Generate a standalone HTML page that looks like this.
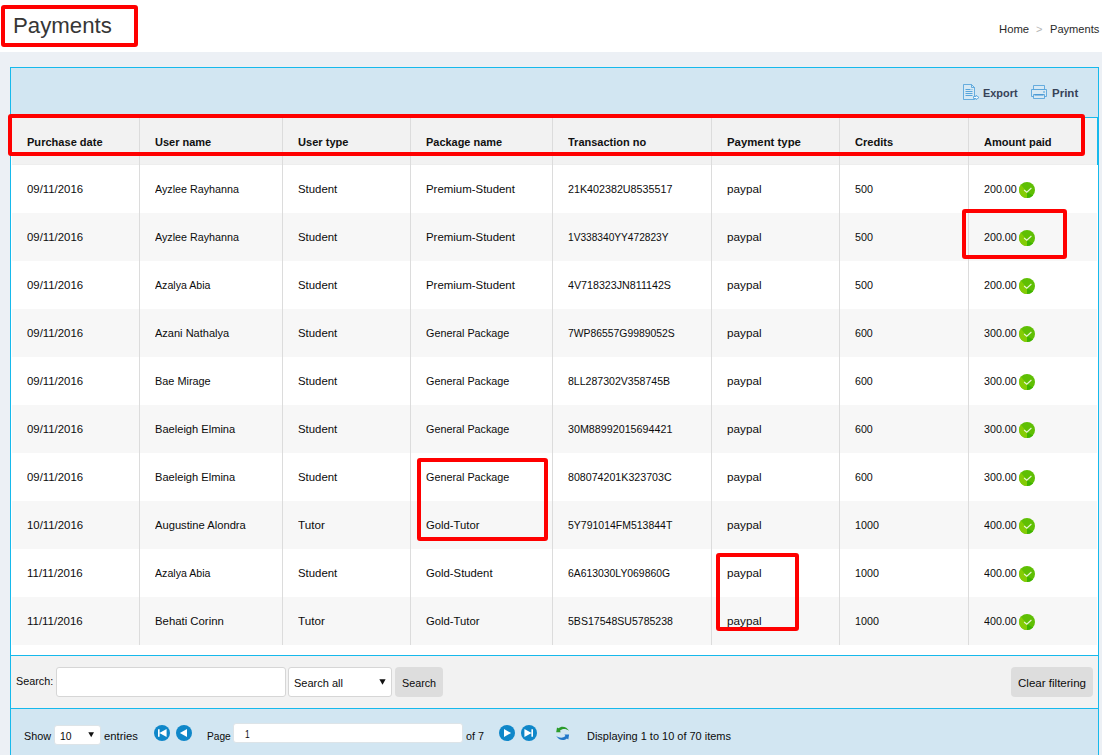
<!DOCTYPE html>
<html><head><meta charset="utf-8"><title>Payments</title>
<style>
html,body{margin:0;padding:0}
body{width:1102px;height:755px;overflow:hidden;position:relative;background:#ecf0f5;font-family:"Liberation Sans",sans-serif}
body>div,body>svg,body>span{position:absolute;display:block;box-sizing:content-box}
.t{white-space:nowrap;line-height:20px;transform-origin:0 50%}
</style></head><body>
<div style="left:0px;top:0px;width:1102px;height:52px;background:#fff;"></div>
<div style="left:10px;top:67px;width:1087px;height:700px;background:#d2e6f2;border:1px solid #16b9ec"></div>
<div style="left:11px;top:117px;width:1087px;height:539px;background:#fff;"></div>
<div style="left:11px;top:117px;width:1087px;height:1px;background:#16b9ec;"></div>
<div style="left:12px;top:118px;width:1085px;height:47px;background:#f2f2f2;"></div>
<div style="left:12px;top:164px;width:1085px;height:1px;background:#eeeeee;"></div>
<div style="left:1097px;top:118px;width:1px;height:47px;background:#16b9ec;"></div>
<div style="left:12px;top:213px;width:1085px;height:48px;background:#f7f7f7;"></div>
<div style="left:12px;top:309px;width:1085px;height:48px;background:#f7f7f7;"></div>
<div style="left:12px;top:405px;width:1085px;height:48px;background:#f7f7f7;"></div>
<div style="left:12px;top:501px;width:1085px;height:48px;background:#f7f7f7;"></div>
<div style="left:12px;top:597px;width:1085px;height:48px;background:#f7f7f7;"></div>
<div style="left:139px;top:118px;width:1px;height:527px;background:#dcdcdc;"></div>
<div style="left:282px;top:118px;width:1px;height:527px;background:#dcdcdc;"></div>
<div style="left:410px;top:118px;width:1px;height:527px;background:#dcdcdc;"></div>
<div style="left:552px;top:118px;width:1px;height:527px;background:#dcdcdc;"></div>
<div style="left:711px;top:118px;width:1px;height:527px;background:#dcdcdc;"></div>
<div style="left:839px;top:118px;width:1px;height:527px;background:#dcdcdc;"></div>
<div style="left:968px;top:118px;width:1px;height:527px;background:#dcdcdc;"></div>
<div style="left:11px;top:655px;width:1087px;height:1px;background:#16b9ec;"></div>
<div style="left:11px;top:656px;width:1087px;height:52px;background:#f2f2f2;"></div>
<div style="left:11px;top:708px;width:1087px;height:1px;background:#16b9ec;"></div>
<div style="left:56px;top:667px;width:228px;height:28px;background:#fff;border:1px solid #d6d6d6;border-radius:3px"></div>
<div style="left:288px;top:667px;width:102px;height:28px;background:#fff;border:1px solid #d6d6d6;border-radius:3px"></div>
<svg style="left:378.5px;top:679px" width="7" height="6.2" viewBox="0 0 8 7"><path d="M0.4 0.3h7.2L4 6.6z" fill="#111"/></svg>
<div style="left:395px;top:667px;width:48px;height:30px;background:#dddddd;border-radius:4px"></div>
<div style="left:1011px;top:667px;width:82px;height:30px;background:#dddddd;border-radius:4px"></div>
<div style="left:54.4px;top:725.2px;width:44.6px;height:17.6px;background:#fff;border:1px solid #dde4e8;border-radius:3px"></div>
<svg style="left:87.8px;top:732.2px" width="6.4" height="5.6" viewBox="0 0 8 7"><path d="M0.4 0.3h7.2L4 6.6z" fill="#111"/></svg>
<div style="left:233px;top:723px;width:228px;height:18px;background:#fff;border:1px solid #dde4e8;border-radius:3px"></div>
<svg style="left:154px;top:725px" width="16" height="16" viewBox="0 0 16 16"><circle cx="8" cy="8" r="8" fill="#0f87c9"/><path d="M4 4.2h1.6v7.6H4z M5.4 8L12.6 4.1V11.9z" fill="#fff"/></svg>
<svg style="left:176px;top:725px" width="16" height="16" viewBox="0 0 16 16"><circle cx="8" cy="8" r="8" fill="#0f87c9"/><path d="M3.9 8L11 4v8z" fill="#fff"/></svg>
<svg style="left:499px;top:725px" width="16" height="16" viewBox="0 0 16 16"><circle cx="8" cy="8" r="8" fill="#0f87c9"/><path d="M12.1 8L5 4v8z" fill="#fff"/></svg>
<svg style="left:521px;top:725px" width="16" height="16" viewBox="0 0 16 16"><circle cx="8" cy="8" r="8" fill="#0f87c9"/><path d="M10.4 4.2H12v7.6h-1.6z M10.6 8L3.4 4.1V11.9z" fill="#fff"/></svg>
<svg style="left:555px;top:725px" width="16" height="17" viewBox="0 0 16 17">
<path id="ra" d="M14.1 5.7C12 2.1 7 0.1 3.4 3.3L2 2.4L1.2 7.2L5.8 7.2L4.9 5.7C7.5 3.3 11 3.7 14.1 5.7Z" fill="#2b9c2b"/>
<path d="M14.1 5.7C12 2.1 7 0.1 3.4 3.3L2 2.4L1.2 7.2L5.8 7.2L4.9 5.7C7.5 3.3 11 3.7 14.1 5.7Z" fill="#2177c9" transform="rotate(180 7.65 8.4)"/>
</svg>
<svg style="left:962px;top:83px" width="18" height="18" viewBox="0 0 18 18">
<path d="M1.5 1.5H9.5L12.5 4.5V16.5H1.5z" fill="#d7e9f4" stroke="#4a9dd8" stroke-width="0.8"/>
<path d="M9.5 1.5V4.5H12.5" fill="none" stroke="#4a9dd8" stroke-width="0.8"/>
<path d="M3.5 6.5H8.5M9.6 6.5H10.4M3.5 8.5H10.5M3.5 10.5H10.5M3.5 12.5H10.5" stroke="#4a9dd8" stroke-width="0.9"/>
<path d="M11.5 13.5H14V12.3L17 14.5L14 16.7V15.5H11.5z" fill="#f4fafd" stroke="#4a9dd8" stroke-width="0.8"/>
</svg>
<svg style="left:1030px;top:84px" width="18" height="16" viewBox="0 0 18 16">
<path d="M3.5 1.5H14.5V5.5H3.5z" fill="#d7e9f4" stroke="#4a9dd8" stroke-width="0.8"/>
<path d="M1.5 5.5H16.5V12.5H1.5z" fill="#d7e9f4" stroke="#4a9dd8" stroke-width="0.8"/>
<path d="M3.5 10.5H14.5V14.5H3.5z" fill="#d7e9f4" stroke="#4a9dd8" stroke-width="0.8"/>
<path d="M4.5 10.9H13.5" stroke="#3f93d3" stroke-width="1.2"/>
<rect x="13.3" y="7.3" width="1.4" height="1.4" fill="#4a9dd8"/>
</svg>
<svg style="left:1019px;top:182px" width="16" height="16" viewBox="0 0 16 16">
<defs><clipPath id="c0"><circle cx="8" cy="8" r="8"/></clipPath></defs>
<g clip-path="url(#c0)"><rect width="16" height="16" fill="#5fbf04"/>
<path d="M8 10.2L-1 -1L-1 17L8 17z" fill="#84cc05"/>
<path d="M8 10.2L8 17L17 17L17 15z" fill="#3fb400"/></g>
<path d="M5.1 8L7.8 10.2L12.4 6" fill="none" stroke="#e9f7d6" stroke-width="1.1"/>
</svg>
<svg style="left:1019px;top:230px" width="16" height="16" viewBox="0 0 16 16">
<defs><clipPath id="c1"><circle cx="8" cy="8" r="8"/></clipPath></defs>
<g clip-path="url(#c1)"><rect width="16" height="16" fill="#5fbf04"/>
<path d="M8 10.2L-1 -1L-1 17L8 17z" fill="#84cc05"/>
<path d="M8 10.2L8 17L17 17L17 15z" fill="#3fb400"/></g>
<path d="M5.1 8L7.8 10.2L12.4 6" fill="none" stroke="#e9f7d6" stroke-width="1.1"/>
</svg>
<svg style="left:1019px;top:278px" width="16" height="16" viewBox="0 0 16 16">
<defs><clipPath id="c2"><circle cx="8" cy="8" r="8"/></clipPath></defs>
<g clip-path="url(#c2)"><rect width="16" height="16" fill="#5fbf04"/>
<path d="M8 10.2L-1 -1L-1 17L8 17z" fill="#84cc05"/>
<path d="M8 10.2L8 17L17 17L17 15z" fill="#3fb400"/></g>
<path d="M5.1 8L7.8 10.2L12.4 6" fill="none" stroke="#e9f7d6" stroke-width="1.1"/>
</svg>
<svg style="left:1019px;top:326px" width="16" height="16" viewBox="0 0 16 16">
<defs><clipPath id="c3"><circle cx="8" cy="8" r="8"/></clipPath></defs>
<g clip-path="url(#c3)"><rect width="16" height="16" fill="#5fbf04"/>
<path d="M8 10.2L-1 -1L-1 17L8 17z" fill="#84cc05"/>
<path d="M8 10.2L8 17L17 17L17 15z" fill="#3fb400"/></g>
<path d="M5.1 8L7.8 10.2L12.4 6" fill="none" stroke="#e9f7d6" stroke-width="1.1"/>
</svg>
<svg style="left:1019px;top:374px" width="16" height="16" viewBox="0 0 16 16">
<defs><clipPath id="c4"><circle cx="8" cy="8" r="8"/></clipPath></defs>
<g clip-path="url(#c4)"><rect width="16" height="16" fill="#5fbf04"/>
<path d="M8 10.2L-1 -1L-1 17L8 17z" fill="#84cc05"/>
<path d="M8 10.2L8 17L17 17L17 15z" fill="#3fb400"/></g>
<path d="M5.1 8L7.8 10.2L12.4 6" fill="none" stroke="#e9f7d6" stroke-width="1.1"/>
</svg>
<svg style="left:1019px;top:422px" width="16" height="16" viewBox="0 0 16 16">
<defs><clipPath id="c5"><circle cx="8" cy="8" r="8"/></clipPath></defs>
<g clip-path="url(#c5)"><rect width="16" height="16" fill="#5fbf04"/>
<path d="M8 10.2L-1 -1L-1 17L8 17z" fill="#84cc05"/>
<path d="M8 10.2L8 17L17 17L17 15z" fill="#3fb400"/></g>
<path d="M5.1 8L7.8 10.2L12.4 6" fill="none" stroke="#e9f7d6" stroke-width="1.1"/>
</svg>
<svg style="left:1019px;top:470px" width="16" height="16" viewBox="0 0 16 16">
<defs><clipPath id="c6"><circle cx="8" cy="8" r="8"/></clipPath></defs>
<g clip-path="url(#c6)"><rect width="16" height="16" fill="#5fbf04"/>
<path d="M8 10.2L-1 -1L-1 17L8 17z" fill="#84cc05"/>
<path d="M8 10.2L8 17L17 17L17 15z" fill="#3fb400"/></g>
<path d="M5.1 8L7.8 10.2L12.4 6" fill="none" stroke="#e9f7d6" stroke-width="1.1"/>
</svg>
<svg style="left:1019px;top:518px" width="16" height="16" viewBox="0 0 16 16">
<defs><clipPath id="c7"><circle cx="8" cy="8" r="8"/></clipPath></defs>
<g clip-path="url(#c7)"><rect width="16" height="16" fill="#5fbf04"/>
<path d="M8 10.2L-1 -1L-1 17L8 17z" fill="#84cc05"/>
<path d="M8 10.2L8 17L17 17L17 15z" fill="#3fb400"/></g>
<path d="M5.1 8L7.8 10.2L12.4 6" fill="none" stroke="#e9f7d6" stroke-width="1.1"/>
</svg>
<svg style="left:1019px;top:566px" width="16" height="16" viewBox="0 0 16 16">
<defs><clipPath id="c8"><circle cx="8" cy="8" r="8"/></clipPath></defs>
<g clip-path="url(#c8)"><rect width="16" height="16" fill="#5fbf04"/>
<path d="M8 10.2L-1 -1L-1 17L8 17z" fill="#84cc05"/>
<path d="M8 10.2L8 17L17 17L17 15z" fill="#3fb400"/></g>
<path d="M5.1 8L7.8 10.2L12.4 6" fill="none" stroke="#e9f7d6" stroke-width="1.1"/>
</svg>
<svg style="left:1019px;top:614px" width="16" height="16" viewBox="0 0 16 16">
<defs><clipPath id="c9"><circle cx="8" cy="8" r="8"/></clipPath></defs>
<g clip-path="url(#c9)"><rect width="16" height="16" fill="#5fbf04"/>
<path d="M8 10.2L-1 -1L-1 17L8 17z" fill="#84cc05"/>
<path d="M8 10.2L8 17L17 17L17 15z" fill="#3fb400"/></g>
<path d="M5.1 8L7.8 10.2L12.4 6" fill="none" stroke="#e9f7d6" stroke-width="1.1"/>
</svg>
<div style="left:1px;top:5px;width:129px;height:34px;border:4px solid #ff0000;border-radius:3px"></div>
<div style="left:8px;top:114px;width:1069px;height:34px;border:4px solid #ff0000;border-radius:3px"></div>
<div style="left:962px;top:209px;width:97px;height:42px;border:4px solid #ff0000;border-radius:3px"></div>
<div style="left:417px;top:458px;width:123px;height:75px;border:4px solid #ff0000;border-radius:3px"></div>
<div style="left:716px;top:553px;width:75px;height:70px;border:4px solid #ff0000;border-radius:3px"></div>
<span class="t" style="left:12.91px;top:15.5px;font-size:22.5px;color:#363636;transform:scaleX(0.9879)">Payments</span>
<span class="t" style="left:998.60px;top:19.0px;font-size:11.5px;color:#2a2a2a;transform:scaleX(0.9808)">Home</span>
<span class="t" style="left:1036.00px;top:19.0px;font-size:11px;color:#b5b5b5;transform:scaleX(1.0000)">&gt;</span>
<span class="t" style="left:1049.50px;top:19.0px;font-size:11.5px;color:#2a2a2a;transform:scaleX(0.9634)">Payments</span>
<span class="t" style="left:983.20px;top:82.6px;font-size:11.5px;font-weight:bold;color:#374258;transform:scaleX(0.9483)">Export</span>
<span class="t" style="left:1051.80px;top:82.6px;font-size:11.5px;font-weight:bold;color:#374258;transform:scaleX(1.0013)">Print</span>
<span class="t" style="left:27.20px;top:132.0px;font-size:11.5px;font-weight:bold;color:#111;transform:scaleX(0.9614)">Purchase date</span>
<span class="t" style="left:155.30px;top:132.0px;font-size:11.5px;font-weight:bold;color:#111;transform:scaleX(0.9553)">User name</span>
<span class="t" style="left:298.30px;top:132.0px;font-size:11.5px;font-weight:bold;color:#111;transform:scaleX(0.9631)">User type</span>
<span class="t" style="left:426.40px;top:132.0px;font-size:11.5px;font-weight:bold;color:#111;transform:scaleX(0.9520)">Package name</span>
<span class="t" style="left:568.30px;top:132.0px;font-size:11.5px;font-weight:bold;color:#111;transform:scaleX(0.9552)">Transaction no</span>
<span class="t" style="left:727.30px;top:132.0px;font-size:11.5px;font-weight:bold;color:#111;transform:scaleX(0.9881)">Payment type</span>
<span class="t" style="left:855.30px;top:132.0px;font-size:11.5px;font-weight:bold;color:#111;transform:scaleX(0.9637)">Credits</span>
<span class="t" style="left:984.00px;top:132.0px;font-size:11.5px;font-weight:bold;color:#111;transform:scaleX(0.9624)">Amount paid</span>
<span class="t" style="left:27.20px;top:179.0px;font-size:11.5px;color:#0c0c0c;transform:scaleX(0.9892)">09/11/2016</span>
<span class="t" style="left:155.00px;top:179.0px;font-size:11.5px;color:#0c0c0c;transform:scaleX(0.9333)">Ayzlee Rayhanna</span>
<span class="t" style="left:298.30px;top:179.0px;font-size:11.5px;color:#0c0c0c;transform:scaleX(0.9889)">Student</span>
<span class="t" style="left:426.40px;top:179.0px;font-size:11.5px;color:#0c0c0c;transform:scaleX(0.9935)">Premium-Student</span>
<span class="t" style="left:568.20px;top:179.0px;font-size:11.5px;color:#0c0c0c;transform:scaleX(0.9326)">21K402382U8535517</span>
<span class="t" style="left:727.30px;top:179.0px;font-size:11.5px;color:#0c0c0c;transform:scaleX(1.0200)">paypal</span>
<span class="t" style="left:855.30px;top:179.0px;font-size:11.5px;color:#0c0c0c;transform:scaleX(0.9366)">500</span>
<span class="t" style="left:984.10px;top:179.0px;font-size:11.5px;color:#0c0c0c;transform:scaleX(0.9316)">200.00</span>
<span class="t" style="left:27.20px;top:227.0px;font-size:11.5px;color:#0c0c0c;transform:scaleX(0.9892)">09/11/2016</span>
<span class="t" style="left:155.00px;top:227.0px;font-size:11.5px;color:#0c0c0c;transform:scaleX(0.9333)">Ayzlee Rayhanna</span>
<span class="t" style="left:298.30px;top:227.0px;font-size:11.5px;color:#0c0c0c;transform:scaleX(0.9889)">Student</span>
<span class="t" style="left:426.40px;top:227.0px;font-size:11.5px;color:#0c0c0c;transform:scaleX(0.9935)">Premium-Student</span>
<span class="t" style="left:568.20px;top:227.0px;font-size:11.5px;color:#0c0c0c;transform:scaleX(0.8830)">1V338340YY472823Y</span>
<span class="t" style="left:727.30px;top:227.0px;font-size:11.5px;color:#0c0c0c;transform:scaleX(1.0200)">paypal</span>
<span class="t" style="left:855.30px;top:227.0px;font-size:11.5px;color:#0c0c0c;transform:scaleX(0.9366)">500</span>
<span class="t" style="left:984.10px;top:227.0px;font-size:11.5px;color:#0c0c0c;transform:scaleX(0.9316)">200.00</span>
<span class="t" style="left:27.20px;top:275.0px;font-size:11.5px;color:#0c0c0c;transform:scaleX(0.9892)">09/11/2016</span>
<span class="t" style="left:155.00px;top:275.0px;font-size:11.5px;color:#0c0c0c;transform:scaleX(0.9228)">Azalya Abia</span>
<span class="t" style="left:298.30px;top:275.0px;font-size:11.5px;color:#0c0c0c;transform:scaleX(0.9889)">Student</span>
<span class="t" style="left:426.40px;top:275.0px;font-size:11.5px;color:#0c0c0c;transform:scaleX(0.9935)">Premium-Student</span>
<span class="t" style="left:568.20px;top:275.0px;font-size:11.5px;color:#0c0c0c;transform:scaleX(0.9293)">4V718323JN811142S</span>
<span class="t" style="left:727.30px;top:275.0px;font-size:11.5px;color:#0c0c0c;transform:scaleX(1.0200)">paypal</span>
<span class="t" style="left:855.30px;top:275.0px;font-size:11.5px;color:#0c0c0c;transform:scaleX(0.9366)">500</span>
<span class="t" style="left:984.10px;top:275.0px;font-size:11.5px;color:#0c0c0c;transform:scaleX(0.9316)">200.00</span>
<span class="t" style="left:27.20px;top:323.0px;font-size:11.5px;color:#0c0c0c;transform:scaleX(0.9892)">09/11/2016</span>
<span class="t" style="left:155.00px;top:323.0px;font-size:11.5px;color:#0c0c0c;transform:scaleX(0.9583)">Azani Nathalya</span>
<span class="t" style="left:298.30px;top:323.0px;font-size:11.5px;color:#0c0c0c;transform:scaleX(0.9889)">Student</span>
<span class="t" style="left:426.40px;top:323.0px;font-size:11.5px;color:#0c0c0c;transform:scaleX(0.9382)">General Package</span>
<span class="t" style="left:568.20px;top:323.0px;font-size:11.5px;color:#0c0c0c;transform:scaleX(0.9029)">7WP86557G9989052S</span>
<span class="t" style="left:727.30px;top:323.0px;font-size:11.5px;color:#0c0c0c;transform:scaleX(1.0200)">paypal</span>
<span class="t" style="left:855.30px;top:323.0px;font-size:11.5px;color:#0c0c0c;transform:scaleX(0.9260)">600</span>
<span class="t" style="left:984.10px;top:323.0px;font-size:11.5px;color:#0c0c0c;transform:scaleX(0.9287)">300.00</span>
<span class="t" style="left:27.20px;top:371.0px;font-size:11.5px;color:#0c0c0c;transform:scaleX(0.9892)">09/11/2016</span>
<span class="t" style="left:155.00px;top:371.0px;font-size:11.5px;color:#0c0c0c;transform:scaleX(0.9467)">Bae Mirage</span>
<span class="t" style="left:298.30px;top:371.0px;font-size:11.5px;color:#0c0c0c;transform:scaleX(0.9889)">Student</span>
<span class="t" style="left:426.40px;top:371.0px;font-size:11.5px;color:#0c0c0c;transform:scaleX(0.9382)">General Package</span>
<span class="t" style="left:568.20px;top:371.0px;font-size:11.5px;color:#0c0c0c;transform:scaleX(0.9175)">8LL287302V358745B</span>
<span class="t" style="left:727.30px;top:371.0px;font-size:11.5px;color:#0c0c0c;transform:scaleX(1.0200)">paypal</span>
<span class="t" style="left:855.30px;top:371.0px;font-size:11.5px;color:#0c0c0c;transform:scaleX(0.9260)">600</span>
<span class="t" style="left:984.10px;top:371.0px;font-size:11.5px;color:#0c0c0c;transform:scaleX(0.9287)">300.00</span>
<span class="t" style="left:27.20px;top:419.0px;font-size:11.5px;color:#0c0c0c;transform:scaleX(0.9892)">09/11/2016</span>
<span class="t" style="left:155.00px;top:419.0px;font-size:11.5px;color:#0c0c0c;transform:scaleX(0.9652)">Baeleigh Elmina</span>
<span class="t" style="left:298.30px;top:419.0px;font-size:11.5px;color:#0c0c0c;transform:scaleX(0.9889)">Student</span>
<span class="t" style="left:426.40px;top:419.0px;font-size:11.5px;color:#0c0c0c;transform:scaleX(0.9382)">General Package</span>
<span class="t" style="left:568.20px;top:419.0px;font-size:11.5px;color:#0c0c0c;transform:scaleX(0.9326)">30M88992015694421</span>
<span class="t" style="left:727.30px;top:419.0px;font-size:11.5px;color:#0c0c0c;transform:scaleX(1.0200)">paypal</span>
<span class="t" style="left:855.30px;top:419.0px;font-size:11.5px;color:#0c0c0c;transform:scaleX(0.9260)">600</span>
<span class="t" style="left:984.10px;top:419.0px;font-size:11.5px;color:#0c0c0c;transform:scaleX(0.9287)">300.00</span>
<span class="t" style="left:27.20px;top:467.0px;font-size:11.5px;color:#0c0c0c;transform:scaleX(0.9892)">09/11/2016</span>
<span class="t" style="left:155.00px;top:467.0px;font-size:11.5px;color:#0c0c0c;transform:scaleX(0.9652)">Baeleigh Elmina</span>
<span class="t" style="left:298.30px;top:467.0px;font-size:11.5px;color:#0c0c0c;transform:scaleX(0.9889)">Student</span>
<span class="t" style="left:426.40px;top:467.0px;font-size:11.5px;color:#0c0c0c;transform:scaleX(0.9382)">General Package</span>
<span class="t" style="left:568.20px;top:467.0px;font-size:11.5px;color:#0c0c0c;transform:scaleX(0.9256)">808074201K323703C</span>
<span class="t" style="left:727.30px;top:467.0px;font-size:11.5px;color:#0c0c0c;transform:scaleX(1.0200)">paypal</span>
<span class="t" style="left:855.30px;top:467.0px;font-size:11.5px;color:#0c0c0c;transform:scaleX(0.9260)">600</span>
<span class="t" style="left:984.10px;top:467.0px;font-size:11.5px;color:#0c0c0c;transform:scaleX(0.9287)">300.00</span>
<span class="t" style="left:27.20px;top:515.0px;font-size:11.5px;color:#0c0c0c;transform:scaleX(0.9892)">10/11/2016</span>
<span class="t" style="left:155.00px;top:515.0px;font-size:11.5px;color:#0c0c0c;transform:scaleX(0.9727)">Augustine Alondra</span>
<span class="t" style="left:298.30px;top:515.0px;font-size:11.5px;color:#0c0c0c;transform:scaleX(1.0156)">Tutor</span>
<span class="t" style="left:426.40px;top:515.0px;font-size:11.5px;color:#0c0c0c;transform:scaleX(0.9816)">Gold-Tutor</span>
<span class="t" style="left:568.20px;top:515.0px;font-size:11.5px;color:#0c0c0c;transform:scaleX(0.9116)">5Y791014FM513844T</span>
<span class="t" style="left:727.30px;top:515.0px;font-size:11.5px;color:#0c0c0c;transform:scaleX(1.0200)">paypal</span>
<span class="t" style="left:855.30px;top:515.0px;font-size:11.5px;color:#0c0c0c;transform:scaleX(0.9330)">1000</span>
<span class="t" style="left:984.10px;top:515.0px;font-size:11.5px;color:#0c0c0c;transform:scaleX(0.9287)">400.00</span>
<span class="t" style="left:27.20px;top:563.0px;font-size:11.5px;color:#0c0c0c;transform:scaleX(0.9972)">11/11/2016</span>
<span class="t" style="left:155.00px;top:563.0px;font-size:11.5px;color:#0c0c0c;transform:scaleX(0.9228)">Azalya Abia</span>
<span class="t" style="left:298.30px;top:563.0px;font-size:11.5px;color:#0c0c0c;transform:scaleX(0.9889)">Student</span>
<span class="t" style="left:426.40px;top:563.0px;font-size:11.5px;color:#0c0c0c;transform:scaleX(0.9815)">Gold-Student</span>
<span class="t" style="left:568.20px;top:563.0px;font-size:11.5px;color:#0c0c0c;transform:scaleX(0.9033)">6A613030LY069860G</span>
<span class="t" style="left:727.30px;top:563.0px;font-size:11.5px;color:#0c0c0c;transform:scaleX(1.0200)">paypal</span>
<span class="t" style="left:855.30px;top:563.0px;font-size:11.5px;color:#0c0c0c;transform:scaleX(0.9330)">1000</span>
<span class="t" style="left:984.10px;top:563.0px;font-size:11.5px;color:#0c0c0c;transform:scaleX(0.9287)">400.00</span>
<span class="t" style="left:27.20px;top:611.0px;font-size:11.5px;color:#0c0c0c;transform:scaleX(0.9972)">11/11/2016</span>
<span class="t" style="left:155.00px;top:611.0px;font-size:11.5px;color:#0c0c0c;transform:scaleX(0.9872)">Behati Corinn</span>
<span class="t" style="left:298.30px;top:611.0px;font-size:11.5px;color:#0c0c0c;transform:scaleX(1.0156)">Tutor</span>
<span class="t" style="left:426.40px;top:611.0px;font-size:11.5px;color:#0c0c0c;transform:scaleX(0.9816)">Gold-Tutor</span>
<span class="t" style="left:568.20px;top:611.0px;font-size:11.5px;color:#0c0c0c;transform:scaleX(0.9170)">5BS17548SU5785238</span>
<span class="t" style="left:727.30px;top:611.0px;font-size:11.5px;color:#0c0c0c;transform:scaleX(1.0200)">paypal</span>
<span class="t" style="left:855.30px;top:611.0px;font-size:11.5px;color:#0c0c0c;transform:scaleX(0.9330)">1000</span>
<span class="t" style="left:984.10px;top:611.0px;font-size:11.5px;color:#0c0c0c;transform:scaleX(0.9287)">400.00</span>
<span class="t" style="left:16.20px;top:671.0px;font-size:11.5px;color:#0c0c0c;transform:scaleX(0.9382)">Search:</span>
<span class="t" style="left:293.60px;top:672.5px;font-size:11.5px;color:#0c0c0c;transform:scaleX(0.9568)">Search all</span>
<span class="t" style="left:402.00px;top:672.5px;font-size:11.5px;color:#0c0c0c;transform:scaleX(0.9350)">Search</span>
<span class="t" style="left:1018.30px;top:672.8px;font-size:11.5px;color:#0c0c0c;transform:scaleX(1.0037)">Clear filtering</span>
<span class="t" style="left:24.20px;top:725.8px;font-size:11.5px;color:#0c0c0c;transform:scaleX(0.9402)">Show</span>
<span class="t" style="left:59.80px;top:725.8px;font-size:11.5px;color:#0c0c0c;transform:scaleX(0.9035)">10</span>
<span class="t" style="left:104.10px;top:725.8px;font-size:11.5px;color:#0c0c0c;transform:scaleX(0.9808)">entries</span>
<span class="t" style="left:207.00px;top:725.8px;font-size:11.5px;color:#0c0c0c;transform:scaleX(0.8843)">Page</span>
<span class="t" style="left:244.80px;top:724.0px;font-size:11px;color:#0c0c0c;transform:scaleX(0.7667)">1</span>
<span class="t" style="left:466.00px;top:725.8px;font-size:11.5px;color:#0c0c0c;transform:scaleX(0.9369)">of 7</span>
<span class="t" style="left:586.60px;top:725.8px;font-size:11.5px;color:#0c0c0c;transform:scaleX(0.9543)">Displaying 1 to 10 of 70 items</span>
</body></html>
